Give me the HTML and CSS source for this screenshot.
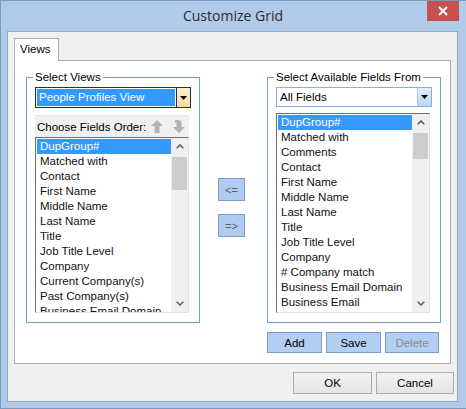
FILE: index.html
```html
<!DOCTYPE html>
<html>
<head>
<meta charset="utf-8">
<title>Customize Grid</title>
<link rel="stylesheet" href="styles.css">
</head>
<body>
<div class="window">
  <div class="titlebar">
    <div class="title">Customize Grid</div>
    <div class="close">
      <svg width="10" height="10" viewBox="0 0 10 10"><path d="M1 1L9 9M9 1L1 9" stroke="#fff" stroke-width="2"/></svg>
    </div>
  </div>
  <div class="client">
    <div class="tabs"><div class="tab">Views</div></div>
    <div class="panel">
      <div class="columns">
        <div class="group">
          <div class="legend">Select Views</div>
          <div class="combo combo-focus">
            <div class="combo-value sel">People Profiles View</div>
            <div class="combo-btn orange">
              <svg width="7" height="4" viewBox="0 0 7 4"><path d="M0 0H7L3.5 4Z" fill="#000"/></svg>
            </div>
          </div>
          <div class="toolbar">
            <span class="toolbar-label">Choose Fields Order:</span>
            <svg class="tool-icon" width="12" height="13" viewBox="0 0 12 13"><path d="M6 0L12 6H8.5V13H3.5V6H0Z" fill="#b4b4b4"/></svg>
            <svg class="tool-icon" width="12" height="13" viewBox="0 0 12 13"><path d="M6 13L12 7H8.5V3Q8.5 0 5.5 0H2V3H3.5V7H0Z" fill="#b4b4b4"/></svg>
          </div>
          <div class="list list-left">
            <div class="items">
              <div class="item sel">DupGroup#</div>
              <div class="item">Matched with</div>
              <div class="item">Contact</div>
              <div class="item">First Name</div>
              <div class="item">Middle Name</div>
              <div class="item">Last Name</div>
              <div class="item">Title</div>
              <div class="item">Job Title Level</div>
              <div class="item">Company</div>
              <div class="item">Current Company(s)</div>
              <div class="item">Past Company(s)</div>
              <div class="item">Business Email Domain</div>
            </div>
            <div class="scrollbar">
              <div class="sb-btn"><svg width="8" height="5" viewBox="0 0 8 5"><path d="M0.7 4.3L4 1L7.3 4.3" fill="none" stroke="#606060" stroke-width="1.6"/></svg></div>
              <div class="sb-track"><div class="thumb thumb-left"></div></div>
              <div class="sb-btn"><svg width="8" height="5" viewBox="0 0 8 5"><path d="M0.7 0.7L4 4L7.3 0.7" fill="none" stroke="#606060" stroke-width="1.6"/></svg></div>
            </div>
          </div>
        </div>

        <div class="movers">
          <div class="mbtn">&lt;=</div>
          <div class="mbtn">=&gt;</div>
        </div>

        <div class="right-col">
          <div class="group">
            <div class="legend">Select Available Fields From</div>
            <div class="combo combo-plain">
              <div class="combo-value">All Fields</div>
              <div class="combo-btn blue">
                <svg width="7" height="4" viewBox="0 0 7 4"><path d="M0 0H7L3.5 4Z" fill="#000"/></svg>
              </div>
            </div>
            <div class="list list-right">
              <div class="items">
                <div class="item sel">DupGroup#</div>
                <div class="item">Matched with</div>
                <div class="item">Comments</div>
                <div class="item">Contact</div>
                <div class="item">First Name</div>
                <div class="item">Middle Name</div>
                <div class="item">Last Name</div>
                <div class="item">Title</div>
                <div class="item">Job Title Level</div>
                <div class="item">Company</div>
                <div class="item"># Company match</div>
                <div class="item">Business Email Domain</div>
                <div class="item">Business Email</div>
              </div>
              <div class="scrollbar">
                <div class="sb-btn"><svg width="8" height="5" viewBox="0 0 8 5"><path d="M0.7 4.3L4 1L7.3 4.3" fill="none" stroke="#606060" stroke-width="1.6"/></svg></div>
                <div class="sb-track"><div class="thumb thumb-right"></div></div>
                <div class="sb-btn"><svg width="8" height="5" viewBox="0 0 8 5"><path d="M0.7 0.7L4 4L7.3 0.7" fill="none" stroke="#606060" stroke-width="1.6"/></svg></div>
              </div>
            </div>
          </div>
          <div class="btnrow">
            <div class="bbtn">Add</div>
            <div class="bbtn">Save</div>
            <div class="bbtn disabled">Delete</div>
          </div>
        </div>
      </div>
    </div>
    <div class="footer">
      <div class="fbtn ok">OK</div>
      <div class="fbtn cancel">Cancel</div>
    </div>
  </div>
</div>
</body>
</html>
```
FILE: styles.css
```css
* { box-sizing: border-box; }
html, body { margin: 0; padding: 0; }
body {
  width: 466px;
  height: 409px;
  overflow: hidden;
  font-family: "Liberation Sans", Arial, sans-serif;
  font-size: 11.5px;
  color: #000;
  background: #afcbe9;
  white-space: nowrap;
}
.window {
  width: 466px;
  height: 409px;
  background: #afcbe9;
  border: 1px solid #7d9bbf;
  border-right: 0;
  display: flex;
  flex-direction: column;
}
.titlebar {
  height: 30px;
  display: flex;
  align-items: flex-start;
  padding: 0 7px 0 38px;
}
.title {
  flex: 1;
  text-align: center;
  line-height: 29px;
  font-family: "Open Sans", "Noto Sans", sans-serif;
  font-size: 14px;
  color: #2b2b2b;
}
.close {
  width: 32px;
  height: 20px;
  background: #c75050;
  display: flex;
  align-items: center;
  justify-content: center;
}
.client {
  margin-left: 6px;
  width: 451px;
  height: 371px;
  background: #f0f0f0;
  border: 1px solid #8ea6c3;
  padding: 6px 0 0 6px;
  display: flex;
  flex-direction: column;
}
.tabs { display: flex; }
.tab {
  width: 45px;
  height: 23px;
  margin-bottom: -1px;
  position: relative;
  background: #fff;
  border: 1px solid #acacac;
  border-bottom: 0;
  padding-left: 5px;
  line-height: 20px;
}
.panel {
  width: 437px;
  height: 304px;
  background: #fff;
  border: 1px solid #acacac;
}
.columns {
  display: flex;
  padding: 16px 0 0 11px;
}
.group {
  width: 174px;
  height: 246px;
  border: 1px solid #7b9cc2;
  padding: 0 8px;
  display: flex;
  flex-direction: column;
}
.legend {
  align-self: flex-start;
  margin: -8px 0 0 -2px;
  padding: 0 2px;
  background: #fff;
  line-height: 14px;
  height: 14px;
}
.combo {
  margin-top: 3px;
  display: flex;
  width: 156px;
}
.combo-focus {
  height: 21px;
  border: 1px solid #1d2c6e;
}
.combo-focus .combo-value {
  margin: 1px;
}
.combo-value {
  flex: 1;
  padding-left: 2px;
  line-height: 17px;
  overflow: hidden;
}
.sel { background: #3399ff; color: #fff; }
.combo-btn {
  width: 14px;
  display: flex;
  align-items: center;
  justify-content: center;
}
.orange {
  background: linear-gradient(#ffefcf, #fbd898);
  border-left: 1px solid #1d2c6e;
}
.combo-plain {
  height: 20px;
  border: 1px solid #7eb4ea;
}
.combo-plain .combo-value {
  padding-left: 3px;
  line-height: 18px;
}
.blue {
  background: linear-gradient(#e6effa, #bcd5f1);
  border-left: 1px solid #a9c9ec;
}
.toolbar {
  margin-top: 7px;
  width: 154px;
  height: 22px;
  background: #f0f0f0;
  border-top: 1px solid #e2e2e2;
  display: flex;
  align-items: center;
  padding-left: 2px;
}
.toolbar-label { flex: none; width: 114px; }
.tool-icon { flex: none; margin-right: 10px; }
.list {
  width: 154px;
  display: flex;
  border: 1px solid;
  border-color: #6f6f6f #e3e3e3 #e3e3e3 #6f6f6f;
  padding: 0 0 0 1px;
  background: #fff;
  overflow: hidden;
}
.list-left { height: 176px; }
.list-right { height: 200px; margin-top: 6px; }
.items {
  flex: 1;
  overflow: hidden;
  padding-top: 1px;
}
.item {
  height: 15px;
  line-height: 15px;
  padding-left: 3px;
  color: #111;
}
.item.sel { color: #fff; }
.scrollbar {
  width: 17px;
  background: #f0f0f0;
  display: flex;
  flex-direction: column;
}
.sb-btn {
  height: 17px;
  display: flex;
  align-items: center;
  justify-content: center;
}
.sb-track { flex: 1; padding: 2px 1px 0; }
.thumb { background: #cdcdcd; }
.thumb-left { height: 33px; }
.thumb-right { height: 26px; }
.movers {
  width: 67px;
  padding: 101px 0 0 18px;
  display: flex;
  flex-direction: column;
  gap: 13px;
}
.mbtn {
  width: 27px;
  height: 23px;
  background: #aecbf2;
  border: 1px solid #7b9dc4;
  color: #606060;
  font-size: 11px;
  display: flex;
  align-items: center;
  justify-content: center;
}
.right-col { display: flex; flex-direction: column; }
.btnrow {
  margin-top: 9px;
  display: flex;
  gap: 4px;
}
.bbtn {
  width: 55px;
  height: 21px;
  background: #b2cef2;
  border: 1px solid #7b9dc4;
  display: flex;
  align-items: center;
  justify-content: center;
}
.bbtn.disabled { width: 54px; color: #8d8d8d; }
.footer {
  margin-top: 8px;
  display: flex;
  justify-content: flex-end;
  gap: 4px;
  padding-right: 3px;
}
.fbtn {
  height: 22px;
  background: linear-gradient(#f3f3f3, #e4e4e4);
  border: 1px solid #acacac;
  display: flex;
  align-items: center;
  justify-content: center;
}
.ok { width: 79px; }
.cancel { width: 78px; }
```
